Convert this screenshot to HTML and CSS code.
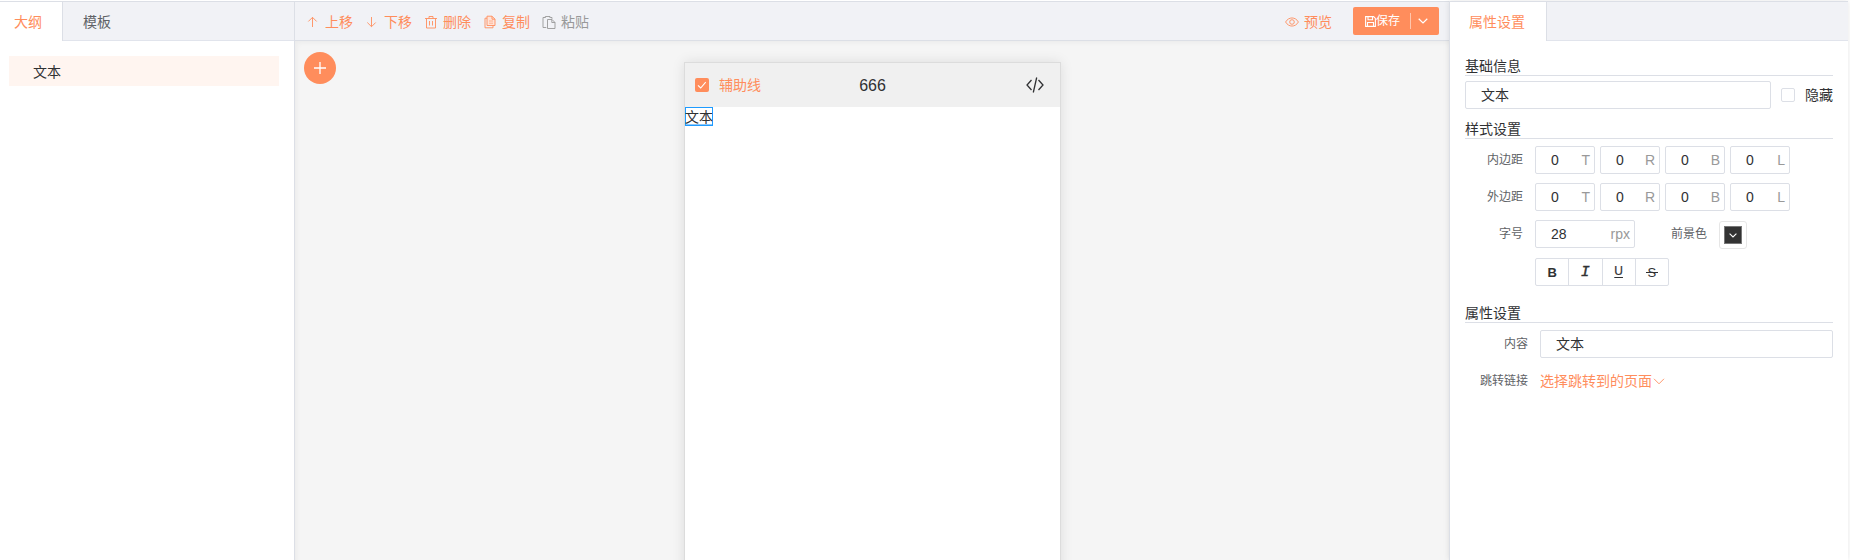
FILE: index.html
```html
<!DOCTYPE html>
<html lang="zh-CN">
<head>
<meta charset="utf-8">
<title>页面设计</title>
<link rel="stylesheet" href="styles.css">
</head>
<body>
<div class="app">
  <aside class="outline">
    <nav class="tabs"><a class="tab tab-first active">大纲</a><a class="tab tab-second">模板</a></nav>
    <div class="tree"><div class="tree-item">文本</div></div>
  </aside>

  <main class="center">
    <header class="toolbar">
      <div class="actions">
        <a class="action"><svg class="icon" viewBox="0 0 14 14"><path d="M6.500 12V2.500M2.300 6.500 6.500 2.300l4.200 4.200"/></svg>上移</a>
        <a class="action"><svg class="icon" viewBox="0 0 14 14"><path d="M6.500 2v9.500M2.300 7.500l4.200 4.200 4.200-4.200"/></svg>下移</a>
        <a class="action"><svg class="icon" viewBox="0 0 14 14"><path d="M1 3.500h12M5 3.500v-2h4v2M2.500 3.500v9.500h9V3.500M5.500 6v4.500M8.500 6v4.500"/></svg>删除</a>
        <a class="action"><svg class="icon" viewBox="0 0 14 14"><path class="tint" d="M4 1.200h5l3 3v6.300H4z"/><path d="M4 1.200h5l3 3v6.300H4zM9 1.200v3h3M4 3.200H2v9.600h8v-2.300"/><path class="faint" d="M6 6h4M6 8.200h4"/></svg>复制</a>
        <a class="action disabled"><svg class="icon" viewBox="0 0 14 14"><path d="M4.300 12.500H1V2.500h2M10 3.800V2.500H8.300M3.300 3V1.500h4.700V3M5.500 4.500h4.500l3 3v6H5.500zM9.800 4.500v3H13"/></svg>粘贴</a>
      </div>
      <div class="right-actions">
        <a class="action"><svg class="icon" viewBox="0 0 14 14"><path d="M.6 7C3.600 1.600 10.400 1.600 13.400 7 10.400 12.400 3.600 12.400.6 7z"/><circle cx="7" cy="7" r="2.300"/></svg>预览</a>
        <div class="save">
          <svg class="save-icon" viewBox="0 0 11 11"><path d="M.6.6h8l1.800 1.800v8H.6zM3 .6v3.100h4.500V.6M2.500 10.400V6.500h6v3.900"/></svg><span class="save-text">保存</span><i class="save-divider"></i><svg class="save-arrow" viewBox="0 0 10 6"><path d="M.7.8 5 5 9.300.8"/></svg>
        </div>
      </div>
    </header>
    <section class="stage">
      <button class="add"><svg class="add-icon" viewBox="0 0 12 12"><path d="M6 0v12M0 6h12"/></svg></button>
      <div class="phone">
        <div class="phone-head">
          <div class="guide"><span class="check checked"><svg class="tick" viewBox="0 0 14 14"><path d="M3 7.300 5.700 10l5-5.800"/></svg></span>辅助线</div>
          <div class="phone-title">666</div>
          <div class="code"><svg class="code-icon" viewBox="0 0 18 16"><path d="M5.500 3 1 8l4.500 5M12.500 3 17 8l-4.500 5M10.700.5 7.300 15.500"/></svg></div>
        </div>
        <div class="phone-body"><span class="selected">文本</span></div>
      </div>
    </section>
  </main>

  <aside class="props">
    <nav class="tabs"><a class="tab tab-props active">属性设置</a></nav>
    <div class="form">
      <h3 class="section">基础信息</h3>
      <div class="name-row">
        <div class="input grow">文本</div>
        <label class="hide"><span class="check"></span>隐藏</label>
      </div>
      <h3 class="section section-style">样式设置</h3>
      <div class="row">
        <span class="label">内边距</span>
        <div class="quad"><div class="input num">0<em class="unit">T</em></div><div class="input num">0<em class="unit">R</em></div><div class="input num">0<em class="unit">B</em></div><div class="input num">0<em class="unit">L</em></div></div>
      </div>
      <div class="row">
        <span class="label">外边距</span>
        <div class="quad"><div class="input num">0<em class="unit">T</em></div><div class="input num">0<em class="unit">R</em></div><div class="input num">0<em class="unit">B</em></div><div class="input num">0<em class="unit">L</em></div></div>
      </div>
      <div class="row">
        <span class="label">字号</span>
        <div class="input size">28<em class="unit">rpx</em></div>
        <span class="label label-color">前景色</span>
        <div class="picker"><div class="swatch"><svg class="swatch-arrow" viewBox="0 0 8 5"><path d="M.6.6 4 4 7.400.6"/></svg></div></div>
      </div>
      <div class="row row-format">
        <div class="format"><b class="fmt">B</b><span class="fmt fmt-i">I</span><span class="fmt fmt-u"><u>U</u></span><span class="fmt fmt-s">S</span></div>
      </div>
      <h3 class="section section-attr">属性设置</h3>
      <div class="row">
        <span class="label wide">内容</span>
        <div class="input grow">文本</div>
      </div>
      <div class="row">
        <span class="label wide">跳转链接</span>
        <a class="link">选择跳转到的页面<svg class="link-arrow" viewBox="0 0 12 7"><path d="M1 .8l5 5 5-5"/></svg></a>
      </div>
    </div>
  </aside>
</div>
</body>
</html>
```

FILE: styles.css
```css
* { box-sizing: border-box; }
body {
  margin: 0;
  background: #fff;
  color: #303133;
  font: 14px/20px "Liberation Sans", "Noto Sans CJK SC", sans-serif;
}
svg { display: block; flex: none; fill: none; stroke: currentColor; }
.app {
  display: flex;
  height: 560px;
  padding-top: 1px;
  overflow: hidden;
}
.outline { width: 294px; border-top: 1px solid #dcdfe6; background: #fff; }
.props {
  width: 399px;
  border-top: 1px solid #dcdfe6;
  background: #fff;
  box-shadow: 0 0 6px rgba(0, 0, 0, .1);
  border-left: 1px solid #dcdfe6;
}
.center {
  display: flex;
  flex-direction: column;
  width: 1155px;
  border-top: 1px solid #dcdfe6;
  border-left: 1px solid #dcdfe6;
}

.tabs {
  display: flex;
  height: 39px;
  background: linear-gradient(#f1f2f6 38px, #e1e4ec 38px);
}
.tab { height: 39px; line-height: 41px; color: #606266; }
.tab.active { background: #fff; color: #ff8d5c; border-right: 1px solid #dcdfe6; }
.tab-first { width: 63px; padding-left: 14px; }
.tab-second { padding-left: 20px; }
.tab-props { width: 97px; padding-left: 19px; }

.tree { padding: 15px 15px 0 9px; }
.tree-item {
  height: 30px;
  padding-left: 24px;
  line-height: 32px;
  background: #fff5f0;
}

.toolbar {
  display: flex;
  flex: none;
  justify-content: space-between;
  height: 39px;
  padding: 0 10px 0 11px;
  background: #f1f2f6;
  border-bottom: 1px solid #dcdfe6;
}
.actions { display: flex; gap: 12px; }
.action {
  display: flex;
  align-items: center;
  gap: 5px;
  height: 38px;
  padding-top: 2px;
  color: #ff8d5c;
}
.action.disabled { color: #999; }
.icon { width: 14px; height: 14px; stroke-width: .9; margin-top: -1px; }
.tint { fill: #ffe3d8; stroke: none; }
.faint { stroke-width: .6; }
.right-actions { display: flex; gap: 21px; }
.save {
  display: flex;
  align-items: center;
  width: 86px;
  height: 28px;
  margin-top: 5px;
  padding-left: 12px;
  border-radius: 2px;
  background: #ff8d5c;
  color: #fff;
  font-size: 12px;
}
.save-icon { width: 11px; height: 11px; stroke-width: 1.1; }
.save-text { width: 24px; }
.save-divider { width: 1px; height: 16px; margin: 0 7px 0 10px; background: #ffc6ad; }
.save-arrow { width: 10px; height: 6px; margin-top: -1px; stroke-width: 1.2; }

.stage {
  display: flex;
  flex: 1;
  padding: 11px 0 0 9px;
  background: #f5f5f5;
  box-shadow: inset 2px 2px 5px rgba(0, 0, 0, .04);
}
.add {
  display: flex;
  align-items: center;
  justify-content: center;
  width: 32px;
  height: 32px;
  padding: 0;
  border: 0;
  border-radius: 50%;
  background: #ff8d5c;
  color: #fff;
}
.add-icon { width: 12px; height: 12px; stroke-width: 1.3; }
.phone {
  width: 377px;
  height: 640px;
  margin: 10px 0 0 348px;
  border: 1px solid #dcdcdc;
  background: #fff;
  box-shadow: 0 0 12px rgba(0, 0, 0, .1);
}
.phone-head {
  display: grid;
  grid-template-columns: 1fr auto 1fr;
  align-items: center;
  height: 44px;
  padding: 0 16px 0 10px;
  background: #f0f0f0;
}
.guide { display: flex; align-items: center; gap: 10px; color: #ff8d5c; }
.check {
  width: 14px;
  height: 14px;
  border: 1px solid #dcdfe6;
  border-radius: 2px;
  background: #fff;
}
.check.checked { border: 0; background: #ff8d5c; color: #fff; }
.tick { width: 14px; height: 14px; stroke-width: 1.1; }
.phone-title { padding: 1px 0 0 6px; font-size: 16px; }
.code { display: flex; justify-content: flex-end; }
.code-icon { width: 18px; height: 16px; stroke-width: 1.3; }
.phone-body { display: flex; }
.selected {
  width: 28px;
  height: 19px;
  line-height: 20px;
  box-shadow: inset 0 0 0 1px #1e9bff, inset 0 -2px #8ac6fa;
}

.form { padding: 15px 15px 0 15px; }
.section {
  height: 20px;
  margin: 0 0 5px;
  border-bottom: 1px solid #dcdfe6;
  font-size: 14px;
  font-weight: 400;
  line-height: 21px;
}
.name-row { display: flex; align-items: center; gap: 10px; margin-bottom: 10px; }
.hide { display: flex; align-items: center; gap: 10px; }
.input {
  display: flex;
  align-items: center;
  justify-content: space-between;
  height: 28px;
  padding: 0 4px 0 15px;
  border: 1px solid #dcdfe6;
  border-radius: 2px;
  background: #fff;
}
.grow { flex: 1; }
.num { width: 60px; }
.size { width: 100px; }
.unit { color: #999; font-style: normal; }
.section-style { margin-bottom: 7px; }
.section-attr { margin: 17px 0 7px; }
.row { display: flex; height: 28px; margin-bottom: 9px; }
.quad { display: flex; gap: 5px; }
.label {
  width: 58px;
  margin-right: 12px;
  color: #606266;
  font-size: 12px;
  line-height: 28px;
  text-align: right;
}
.label.wide { width: 63px; }
.label-color { width: 72px; }
.picker {
  width: 28px;
  height: 28px;
  margin-top: 1px;
  padding: 4px;
  border: 1px solid #e6e6e6;
  border-radius: 3px;
}
.swatch {
  display: flex;
  align-items: center;
  justify-content: center;
  height: 18px;
  background: #333;
  border: 1px solid #777;
  color: #fff;
}
.swatch-arrow { width: 8px; height: 5px; stroke-width: 1.1; }
.row-format { padding-left: 70px; margin-top: 10px; }
.format { display: flex; width: 134px; border: 1px solid #dcdfe6; border-radius: 2px; }
.fmt { flex: 1; font-size: 13px; line-height: 27px; height: 26px; text-align: center; }
.fmt + .fmt { border-left: 1px solid #dcdfe6; }
.fmt-i {
  font-family: "Liberation Mono", monospace;
  font-size: 15px;
  font-style: italic;
  -webkit-text-stroke: .4px;
}
.fmt-u { font-size: 12px; line-height: 25px; -webkit-text-stroke: .2px; }
.fmt-u u { text-underline-offset: 2px; }
.fmt-s {
  background: linear-gradient(#303133, #303133) center 13px / 12px 1px no-repeat;
}
.link { display: flex; align-items: center; color: #ff8d5c; }
.link-arrow { width: 12px; height: 7px; margin-left: 1px; stroke-width: .9; }
```
